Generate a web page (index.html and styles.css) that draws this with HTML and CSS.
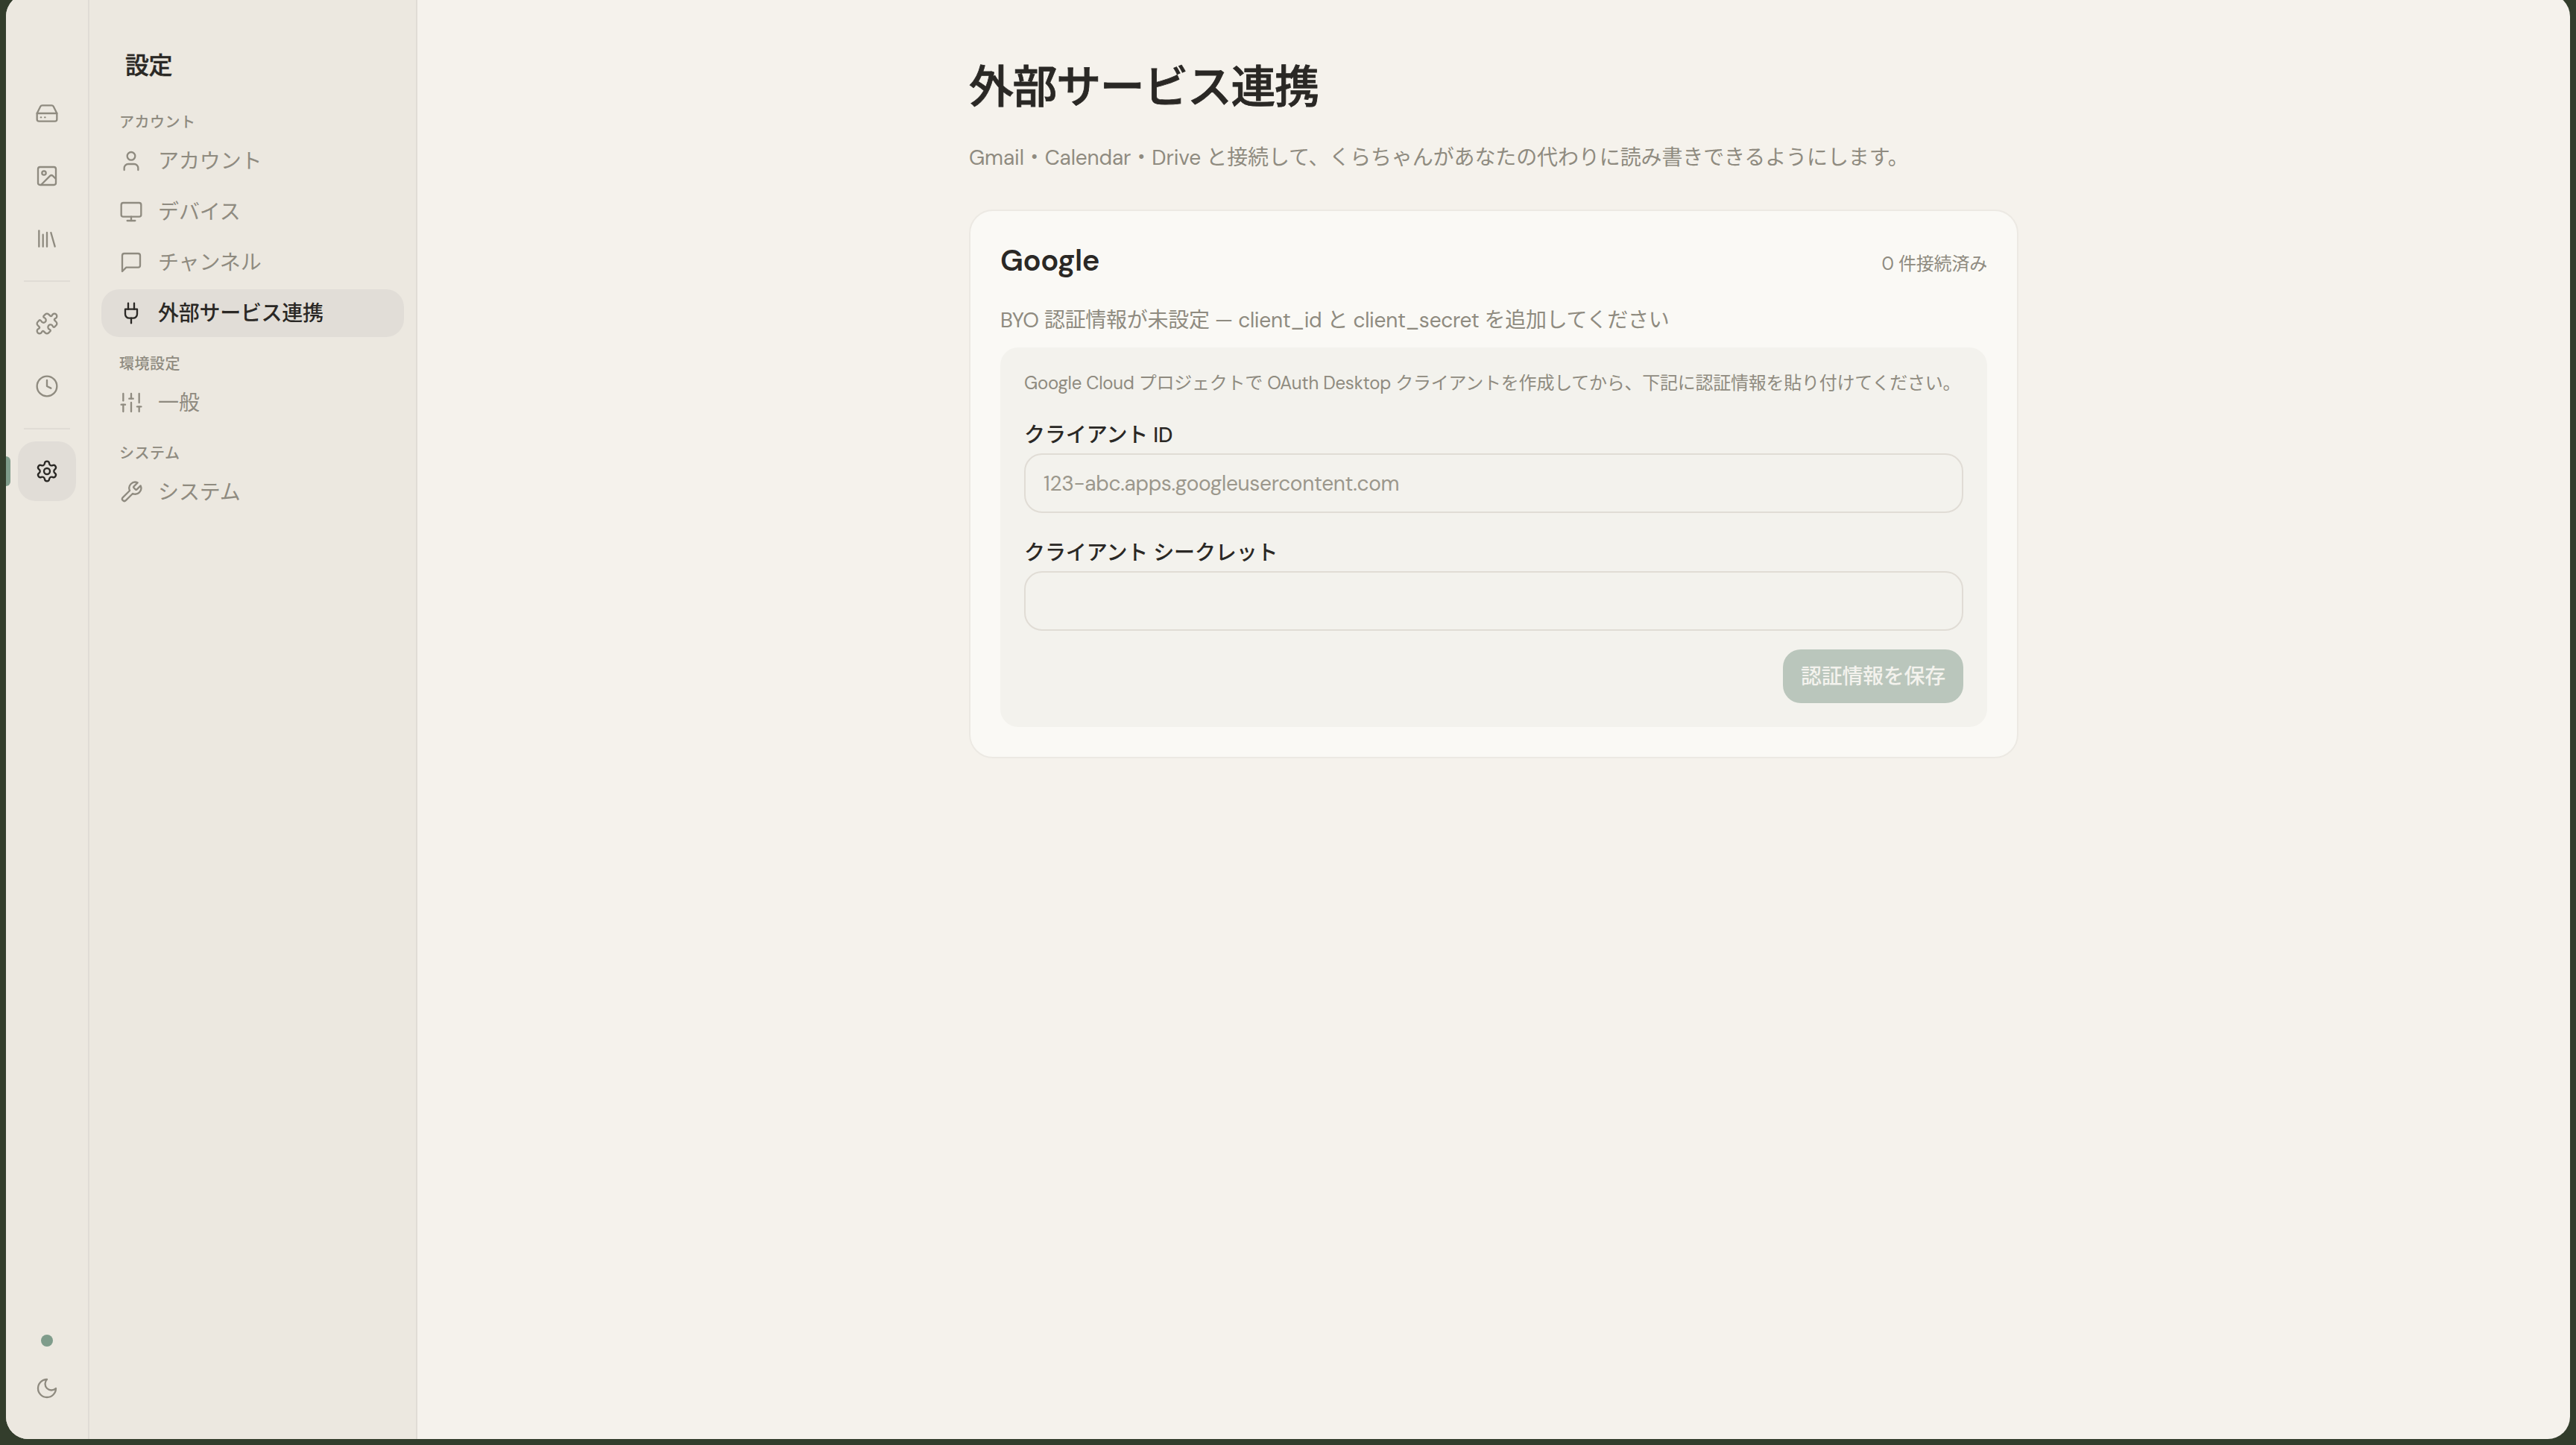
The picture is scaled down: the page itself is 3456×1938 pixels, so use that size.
FILE: index.html
```html
<!DOCTYPE html>
<html lang="ja">
<head>
<meta charset="utf-8">
<title>設定</title>
<link rel="stylesheet" href="styles.css">
</head>
<body>
<div class="window">
  <nav class="rail">
    <div class="rail-group">
      <button class="rail-btn"><svg class="ico" viewBox="0 0 24 24"><path d="M22 12H2"/><path d="M5.45 5.11 2 12v6a2 2 0 0 0 2 2h16a2 2 0 0 0 2-2v-6l-3.45-6.89A2 2 0 0 0 16.76 4H7.24a2 2 0 0 0-1.79 1.11z"/><path d="M6 16h.01"/><path d="M10 16h.01"/></svg></button>
      <button class="rail-btn"><svg class="ico" viewBox="0 0 24 24"><rect x="3" y="3" width="18" height="18" rx="2"/><circle cx="9" cy="9" r="2"/><path d="m21 15-3.086-3.086a2 2 0 0 0-2.828 0L6 21"/></svg></button>
      <button class="rail-btn"><svg class="ico" viewBox="0 0 24 24"><path d="m16 6 4 14"/><path d="M12 6v14"/><path d="M8 8v12"/><path d="M4 4v16"/></svg></button>
    </div>
    <div class="rail-divider"></div>
    <div class="rail-group">
      <button class="rail-btn"><svg class="ico" viewBox="0 0 24 24"><path d="M19.439 7.85c-.049.322.059.648.289.878l1.568 1.568c.47.47.706 1.087.706 1.704s-.235 1.233-.706 1.704l-1.611 1.611a.98.98 0 0 1-.837.276c-.47-.07-.802-.48-.968-.925a2.501 2.501 0 1 0-3.214 3.214c.446.166.855.497.925.968a.979.979 0 0 1-.276.837l-1.61 1.61a2.404 2.404 0 0 1-1.705.707 2.402 2.402 0 0 1-1.704-.706l-1.568-1.568a1.026 1.026 0 0 0-.877-.29c-.493.074-.84.504-1.02.968a2.5 2.5 0 1 1-3.237-3.237c.464-.18.894-.527.967-1.02a1.026 1.026 0 0 0-.289-.877l-1.568-1.568A2.402 2.402 0 0 1 1.998 12c0-.617.236-1.234.706-1.704L4.23 8.77c.24-.24.581-.353.917-.303.515.077.877.528 1.073 1.01a2.5 2.5 0 1 0 3.259-3.259c-.482-.196-.933-.558-1.01-1.073-.05-.336.062-.676.303-.917l1.525-1.525A2.402 2.402 0 0 1 12 1.998c.617 0 1.234.236 1.704.706l1.568 1.568c.23.23.556.338.877.29.493-.074.84-.504 1.02-.968a2.5 2.5 0 1 1 3.237 3.237c-.464.18-.894.527-.967 1.02Z"/></svg></button>
      <button class="rail-btn"><svg class="ico" viewBox="0 0 24 24"><circle cx="12" cy="12" r="10"/><path d="M12 6v6l4 2"/></svg></button>
    </div>
    <div class="rail-divider"></div>
    <div class="rail-group">
      <button class="rail-btn rail-btn-active"><span class="rail-indicator"></span><svg class="ico" viewBox="0 0 24 24"><path d="M9.671 4.136a2.34 2.34 0 0 1 4.659 0 2.34 2.34 0 0 0 3.319 1.915 2.34 2.34 0 0 1 2.33 4.033 2.34 2.34 0 0 0 0 3.831 2.34 2.34 0 0 1-2.33 4.033 2.34 2.34 0 0 0-3.319 1.915 2.34 2.34 0 0 1-4.659 0 2.34 2.34 0 0 0-3.32-1.915 2.34 2.34 0 0 1-2.33-4.033 2.34 2.34 0 0 0 0-3.831A2.34 2.34 0 0 1 6.35 6.051a2.34 2.34 0 0 0 3.319-1.915"/><circle cx="12" cy="12" r="3"/></svg></button>
    </div>
    <div class="rail-foot">
      <span class="status-dot"></span>
      <button class="rail-btn"><svg class="ico" viewBox="0 0 24 24"><path d="M12 3a6 6 0 0 0 9 9 9 9 0 1 1-9-9Z"/></svg></button>
    </div>
  </nav>

  <aside class="sidebar">
    <h2 class="side-title">設定</h2>
    <div class="side-group">
      <div class="side-label">アカウント</div>
      <a class="side-item"><svg class="ico" viewBox="0 0 24 24"><path d="M19 21v-2a4 4 0 0 0-4-4H9a4 4 0 0 0-4 4v2"/><circle cx="12" cy="7" r="4"/></svg><span class="side-text">アカウント</span></a>
      <a class="side-item"><svg class="ico" viewBox="0 0 24 24"><rect x="2" y="3" width="20" height="14" rx="2"/><path d="M8 21h8"/><path d="M12 17v4"/></svg><span class="side-text">デバイス</span></a>
      <a class="side-item"><svg class="ico" viewBox="0 0 24 24"><path d="M21 15a2 2 0 0 1-2 2H7l-4 4V5a2 2 0 0 1 2-2h14a2 2 0 0 1 2 2z"/></svg><span class="side-text">チャンネル</span></a>
      <a class="side-item side-item-active"><svg class="ico" viewBox="0 0 24 24"><path d="M12 22v-5"/><path d="M9 8V2"/><path d="M15 8V2"/><path d="M18 8v5a4 4 0 0 1-4 4h-4a4 4 0 0 1-4-4V8Z"/></svg><span class="side-text">外部サービス連携</span></a>
    </div>
    <div class="side-group">
      <div class="side-label">環境設定</div>
      <a class="side-item"><svg class="ico" viewBox="0 0 24 24"><path d="M4 21v-7"/><path d="M4 10V3"/><path d="M12 21v-9"/><path d="M12 8V3"/><path d="M20 21v-5"/><path d="M20 12V3"/><path d="M2 14h4"/><path d="M10 8h4"/><path d="M18 16h4"/></svg><span class="side-text">一般</span></a>
    </div>
    <div class="side-group">
      <div class="side-label">システム</div>
      <a class="side-item"><svg class="ico" viewBox="0 0 24 24"><path d="M14.7 6.3a1 1 0 0 0 0 1.4l1.6 1.6a1 1 0 0 0 1.4 0l3.77-3.77a6 6 0 0 1-7.94 7.94l-6.91 6.91a2.12 2.12 0 0 1-3-3l6.91-6.91a6 6 0 0 1 7.94-7.94l-3.76 3.76z"/></svg><span class="side-text">システム</span></a>
    </div>
  </aside>

  <main class="main">
    <div class="content">
      <h1 class="page-title">外部サービス連携</h1>
      <p class="page-sub">Gmail・Calendar・Drive と接続して、くらちゃんがあなたの代わりに読み書きできるようにします。</p>
      <section class="card">
        <header class="card-head">
          <h3 class="card-title">Google</h3>
          <span class="card-count">0 件接続済み</span>
        </header>
        <p class="card-status">BYO 認証情報が未設定 — client_id と client_secret を追加してください</p>
        <form class="creds">
          <p class="creds-help">Google Cloud プロジェクトで OAuth Desktop クライアントを作成してから、下記に認証情報を貼り付けてください。</p>
          <div class="field">
            <label class="field-label">クライアント ID</label>
            <div class="field-input"><span class="field-placeholder">123-abc.apps.googleusercontent.com</span></div>
          </div>
          <div class="field">
            <label class="field-label">クライアント シークレット</label>
            <div class="field-input"></div>
          </div>
          <div class="creds-actions"><button type="button" class="save-btn">認証情報を保存</button></div>
        </form>
      </section>
    </div>
  </main>
</div>
</body>
</html>
```
FILE: styles.css
```css
* { box-sizing: border-box; }
html, body { margin: 0; height: 100%; }
body {
  background: #333d2c;
  padding: 0 8px;
  overflow: hidden;
  font-family: "DM Sans", "Inter", "Noto Sans CJK JP", sans-serif;
  color: #2a2825;
}
.window {
  display: flex;
  height: 1938px;
  margin-top: -8px;
  border-radius: 30px;
  overflow: hidden;
  background: #f5f2ec;
}
.ico {
  width: 32px;
  height: 32px;
  flex: none;
  fill: none;
  stroke: currentColor;
  stroke-width: 1.75;
  stroke-linecap: round;
  stroke-linejoin: round;
}

/* icon rail */
.rail {
  width: 112px;
  flex: none;
  display: flex;
  flex-direction: column;
  align-items: center;
  padding: 120px 0 28px;
  background: #ece8e0;
  border-right: 2px solid #e0dcd5;
  color: #8f8b80;
}
.rail-group { display: flex; flex-direction: column; gap: 4px; }
.rail-btn {
  width: 78px;
  height: 80px;
  border: 0;
  padding: 0;
  display: flex;
  align-items: center;
  justify-content: center;
  background: transparent;
  color: inherit;
  border-radius: 24px;
}
.rail-btn-active { position: relative; background: #e1ddd7; color: #2a2825; }
.rail-indicator {
  position: absolute;
  left: -16px;
  top: 20px;
  width: 6px;
  height: 40px;
  border-radius: 0 6px 6px 0;
  background: #7f9c8b;
}
.rail-divider { width: 62px; height: 2px; margin: 16px 0; background: #e0dcd5; flex: none; }
.rail-foot {
  margin-top: auto;
  display: flex;
  flex-direction: column;
  align-items: center;
  gap: 16px;
}
.status-dot { width: 16px; height: 16px; border-radius: 50%; background: #7f9c8b; }

/* settings sidebar */
.sidebar {
  width: 440px;
  flex: none;
  padding: 0 16px;
  background: #ece8e0;
  border-right: 2px solid #e0dcd5;
}
.side-title {
  margin: 0 0 44px;
  padding: 76px 0 0 32px;
  font-size: 32px;
  line-height: 40px;
  font-weight: 500;
  letter-spacing: -0.6px;
  -webkit-text-stroke: 0.4px currentColor;
}
.side-group { display: flex; flex-direction: column; gap: 4px; }
.side-group + .side-group { margin-top: 24px; }
.side-label {
  height: 24px;
  margin-bottom: 4px;
  padding-left: 24px;
  font-size: 20px;
  line-height: 24px;
  font-weight: 500;
  letter-spacing: 0.5px;
  color: #8f8b80;
}
.side-item {
  display: flex;
  align-items: center;
  gap: 20px;
  height: 64px;
  padding: 0 24px;
  border-radius: 24px;
  font-size: 28px;
  letter-spacing: -0.1px;
  color: #8f8b80;
}
.side-text { margin-bottom: 4px; }
.side-item-active { background: #e1ddd7; color: #2a2825; font-weight: 500; letter-spacing: -0.28px; }

/* main */
.main { flex: 1; min-width: 0; }
.content { width: 1408px; margin: 0 auto; padding-top: 86px; }
.page-title {
  margin: 0;
  font-size: 60px;
  line-height: 80px;
  font-weight: 500;
  letter-spacing: -1.4px;
  -webkit-text-stroke: 0.8px currentColor;
}
.page-sub {
  margin: 32px 0 47px;
  font-size: 28px;
  line-height: 44px;
  letter-spacing: -0.12px;
  color: #8f8b80;
}
.card {
  padding: 40px;
  background: #faf9f5;
  border: 2px solid #ece9e3;
  border-radius: 32px;
}
.card-head {
  display: flex;
  align-items: center;
  justify-content: space-between;
  height: 56px;
}
.card-title { margin: -4px 0 0; font-size: 40px; line-height: 56px; font-weight: 600; letter-spacing: -0.4px; }
.card-count { font-size: 24px; color: #8f8b80; letter-spacing: -0.2px; }
.card-status {
  margin: 31px 0 16px;
  font-size: 28px;
  line-height: 40px;
  letter-spacing: -0.28px;
  color: #8f8b80;
}
.creds {
  display: flex;
  flex-direction: column;
  gap: 36px;
  padding: 32px;
  background: #f3f2ed;
  border-radius: 24px;
}
.creds-help { margin: 0; font-size: 24px; line-height: 32px; letter-spacing: -0.24px; color: #8f8b80; white-space: nowrap; }
.field { display: flex; flex-direction: column; gap: 8px; }
.field-label { padding-top: 2px; font-size: 28px; line-height: 32px; font-weight: 500; letter-spacing: -0.12px; color: #2a2825; }
.field-input {
  display: flex;
  align-items: center;
  height: 80px;
  padding: 0 24px;
  border: 2px solid #e0dcd5;
  border-radius: 24px;
  font-size: 28px;
  letter-spacing: -0.3px;
}
.field-placeholder { color: #9b978c; }
.creds-actions { display: flex; justify-content: flex-end; margin-top: -11px; }
.save-btn {
  height: 72px;
  padding: 0 24px 4px;
  border: 0;
  border-radius: 24px;
  background: #bac6bc;
  color: #f3f2ed;
  font-family: inherit;
  font-size: 28px;
  font-weight: 500;
  letter-spacing: -0.28px;
}
```
